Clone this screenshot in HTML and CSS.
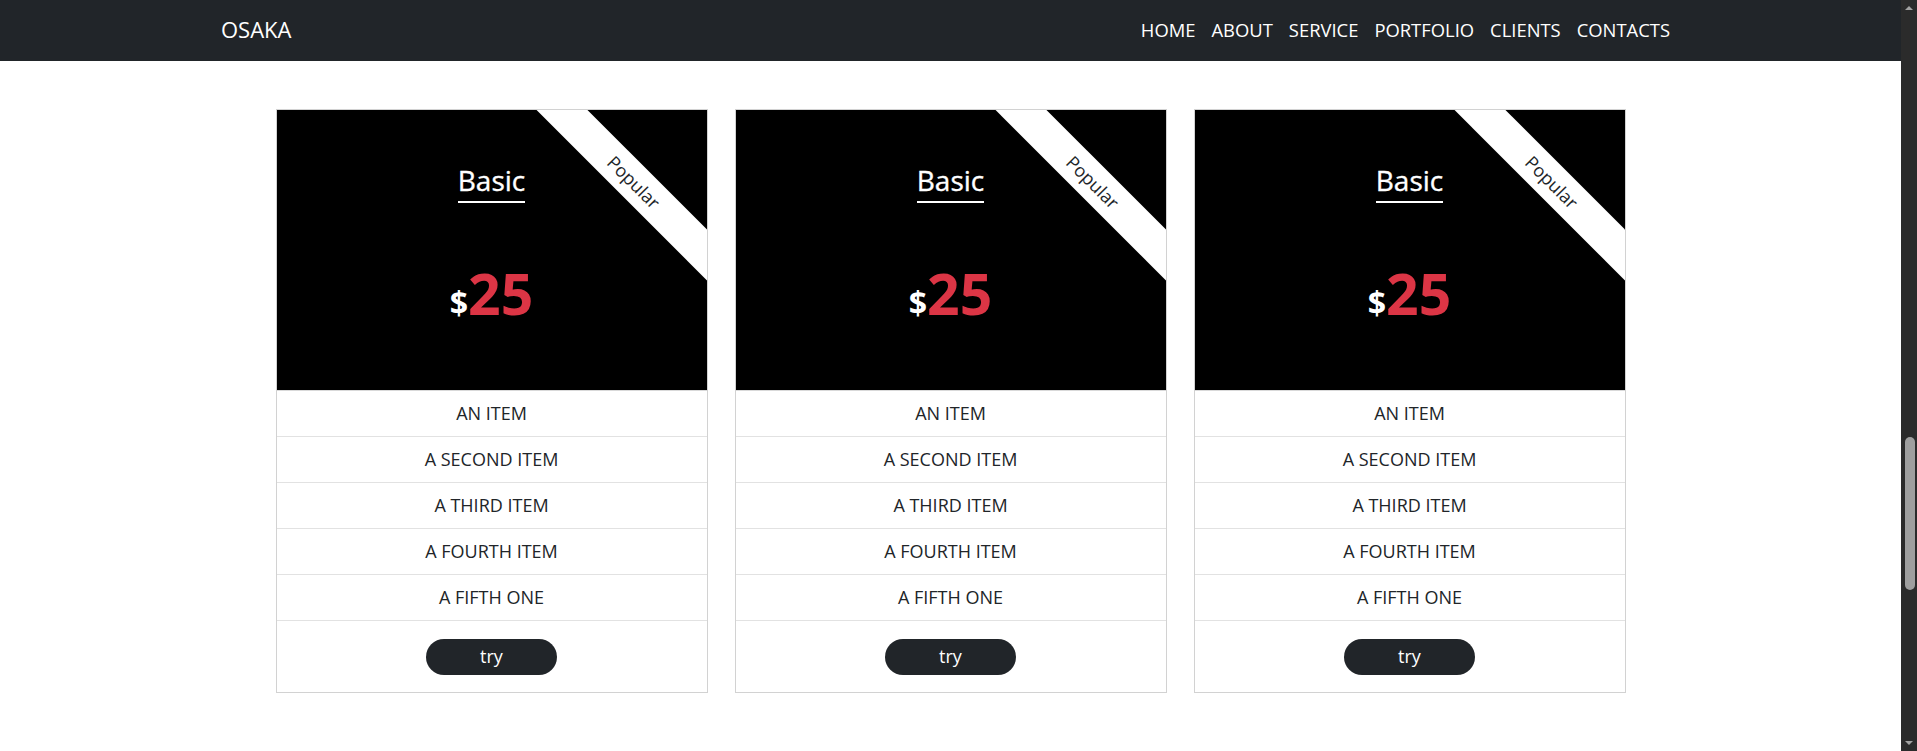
FILE: index.html
```html
<!DOCTYPE html>
<html lang="en">
<head>
<meta charset="utf-8">
<title>Osaka - Pricing</title>
<link rel="stylesheet" href="styles.css">
</head>
<body>
<div class="app">
  <div class="page">
    <header class="navbar">
      <div class="nav-inner">
        <a class="brand" href="#">OSAKA</a>
        <ul class="nav-links">
          <li><a href="#">HOME</a></li>
          <li><a href="#">ABOUT</a></li>
          <li><a href="#">SERVICE</a></li>
          <li><a href="#">PORTFOLIO</a></li>
          <li><a href="#">CLIENTS</a></li>
          <li><a href="#">CONTACTS</a></li>
        </ul>
      </div>
    </header>
    <main class="pricing">
      <div class="card">
        <div class="card-head">
          <div class="ribbon">Popular</div>
          <h3 class="plan">Basic</h3>
          <div class="price"><span class="cur">$</span><span class="amount">25</span></div>
        </div>
        <ul class="items">
          <li>AN ITEM</li>
          <li>A SECOND ITEM</li>
          <li>A THIRD ITEM</li>
          <li>A FOURTH ITEM</li>
          <li>A FIFTH ONE</li>
        </ul>
        <div class="card-foot"><button class="try">try</button></div>
      </div>
      <div class="card">
        <div class="card-head">
          <div class="ribbon">Popular</div>
          <h3 class="plan">Basic</h3>
          <div class="price"><span class="cur">$</span><span class="amount">25</span></div>
        </div>
        <ul class="items">
          <li>AN ITEM</li>
          <li>A SECOND ITEM</li>
          <li>A THIRD ITEM</li>
          <li>A FOURTH ITEM</li>
          <li>A FIFTH ONE</li>
        </ul>
        <div class="card-foot"><button class="try">try</button></div>
      </div>
      <div class="card">
        <div class="card-head">
          <div class="ribbon">Popular</div>
          <h3 class="plan">Basic</h3>
          <div class="price"><span class="cur">$</span><span class="amount">25</span></div>
        </div>
        <ul class="items">
          <li>AN ITEM</li>
          <li>A SECOND ITEM</li>
          <li>A THIRD ITEM</li>
          <li>A FOURTH ITEM</li>
          <li>A FIFTH ONE</li>
        </ul>
        <div class="card-foot"><button class="try">try</button></div>
      </div>
    </main>
  </div>
  <div class="scrollbar">
    <span class="arrow arrow-up"></span>
    <div class="track"><div class="thumb"></div></div>
    <span class="arrow arrow-down"></span>
  </div>
</div>
</body>
</html>
```
FILE: styles.css
```css
* { box-sizing: border-box; }
html, body { margin: 0; padding: 0; height: 100%; overflow: hidden; }
body {
  font-family: "Open Sans", "Liberation Sans", sans-serif;
  color: #212529;
  background: #fff;
}
.app { display: flex; height: 751px; }
.page { flex: 1; min-width: 0; display: flex; flex-direction: column; }

.navbar { background: #212529; height: 61px; flex: none; }
.nav-inner {
  width: 1459px; padding-right: 10px; margin: 0 auto; height: 100%;
  display: flex; align-items: center; justify-content: space-between;
}
.brand { color: #fff; text-decoration: none; font-size: 22px; padding-bottom: 3px; }
.nav-links { list-style: none; margin: 0; padding: 0 0 2px; display: flex; }
.nav-links a { display: block; color: #fff; text-decoration: none; font-size: 18.4px; padding: 0 8px; }
.nav-links li:last-child a { padding-right: 0; }

.pricing { display: flex; justify-content: center; gap: 27px; padding-top: 48px; }
.card { width: 432px; border: 1px solid #d2d2d2; background: #fff; }
.card-head {
  position: relative; overflow: hidden; background: #000; height: 280px;
  display: flex; flex-direction: column; align-items: center; padding-top: 54px;
}
.ribbon {
  position: absolute; left: 207.5px; top: 54px; width: 300px; height: 36px;
  background: #fff; color: #212529; font-size: 18px; line-height: 36px; text-align: center;
  transform: rotate(45deg);
}
.plan {
  margin: 0; color: #fff; font-size: 28px; font-weight: 500; line-height: 1.2;
  padding-bottom: 3px; border-bottom: 2px solid #fff;
  -webkit-text-stroke: 0.35px #fff;
}
.price { margin-top: 56px; font-weight: 700; line-height: 1.2; }
.cur { color: #fff; font-size: 32px; }
.amount { color: #dc3545; font-size: 57px; }

.items { list-style: none; margin: 0; padding: 0; border-top: 1px solid #d9d9d9; }
.items li {
  height: 46px; border-bottom: 1px solid #e2e2e2; display: flex; align-items: center; justify-content: center;
  font-size: 18px; padding-bottom: 2px;
}
.card-foot { height: 71px; display: flex; align-items: center; justify-content: center; }
.try {
  width: 131px; height: 36px; border: 0; border-radius: 18px; background: #212529; color: #fff;
  font-family: inherit; font-size: 18px; padding: 0 0 1px;
}

.scrollbar { width: 16px; flex: none; background: #2b2b2b; display: flex; flex-direction: column; align-items: center; }
.arrow { width: 0; height: 0; border-left: 4px solid transparent; border-right: 4px solid transparent; flex: none; }
.arrow-up { border-bottom: 4px solid #a3a3a3; margin: 6px 0 7px; }
.arrow-down { border-top: 4px solid #a3a3a3; margin: 7px 0 6px; }
.track { flex: 1; width: 100%; display: flex; justify-content: center; }
.thumb { width: 10px; height: 153px; margin-top: 420px; margin-left: 1px; background: #9f9f9f; border-radius: 5px; }
```
